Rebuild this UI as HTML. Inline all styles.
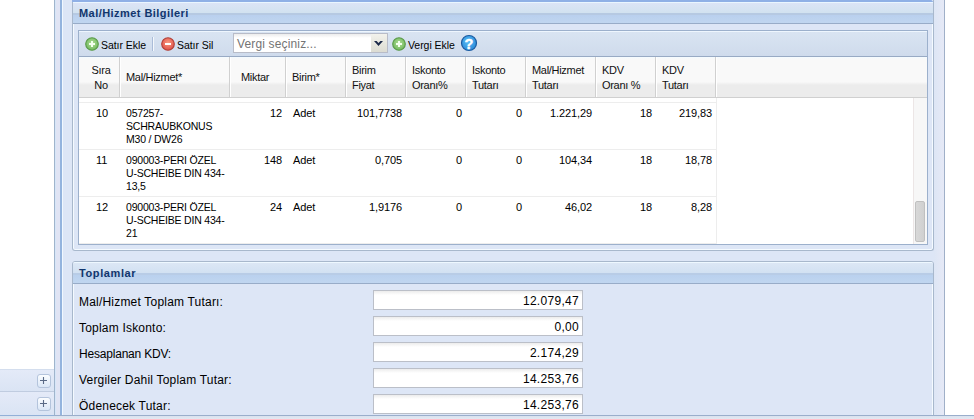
<!DOCTYPE html>
<html><head><meta charset="utf-8">
<style>
*{box-sizing:border-box;margin:0;padding:0}
html,body{width:974px;height:419px;overflow:hidden;background:#fff;font-family:"Liberation Sans",sans-serif;color:#000}
.a{position:absolute}
.hd{position:absolute;font-size:11px;line-height:13px;color:#10366e;font-weight:bold;letter-spacing:0.45px;white-space:nowrap}
.th{position:absolute;font-size:11px;line-height:15px;color:#111;white-space:nowrap;letter-spacing:-0.3px}
.sep{position:absolute;top:57px;height:40px;width:1px;background:#d0d0d0}
.seph{position:absolute;top:57px;height:40px;width:1px;background:#fff}
.td{position:absolute;font-size:11px;line-height:13px;color:#000;white-space:nowrap;letter-spacing:-0.1px}
.r{text-align:right}
.rb{position:absolute;left:79px;width:638px;height:1px;background:#ededed}
.lbl{position:absolute;left:79px;font-size:12px;line-height:14px;color:#000;white-space:nowrap;letter-spacing:0.2px}
.inp{position:absolute;left:373px;width:210px;height:20px;border:1px solid #bbbfc8;background:linear-gradient(#ececec 0,#fff 4px,#fff 100%);font-size:12px;text-align:right;padding-right:3px;line-height:20px;color:#000;letter-spacing:0.3px}
.tb{position:absolute;font-size:10.5px;line-height:13px;color:#000;white-space:nowrap;letter-spacing:-0.05px;margin-top:1px}
.pbox{position:absolute;left:37px;width:14px;height:14px;border:1px solid #b4c4dc;border-radius:3px;background:linear-gradient(#fbfdff,#dbe7f7)}
</style></head><body>

<!-- left panel -->
<div class="a" style="left:54px;top:0;width:1px;height:415px;background:#a0b4cc"></div>
<div class="a" style="left:55px;top:0;width:1px;height:415px;background:#d6e6f8"></div>
<div class="a" style="left:56px;top:0;width:4px;height:415px;background:#e0e4f4"></div>
<div class="a" style="left:60px;top:0;width:2px;height:415px;background:#94b4de"></div>
<div class="a" style="left:62px;top:0;width:1px;height:415px;background:#f0f8ff"></div>
<div class="a" style="left:63px;top:0;width:880px;height:415px;background:#dde6f6"></div>
<div class="a" style="left:934px;top:0;width:10px;height:415px;background:linear-gradient(90deg,#dde6f5,#e6e9f6)"></div>
<div class="a" style="left:944px;top:0;width:1px;height:415px;background:#a0b0c8"></div>

<!-- accordion items -->
<div class="a" style="left:0;top:369px;width:54px;height:22px;background:linear-gradient(#e4eaf8,#dae4f4);border-top:1px solid #d4deee"></div>
<div class="a" style="left:0;top:391px;width:54px;height:1px;background:#c0cce0"></div>
<div class="a" style="left:0;top:392px;width:54px;height:23px;background:linear-gradient(#e4eaf8,#dae4f4)"></div>
<div class="pbox" style="top:374px"></div>
<div class="pbox" style="top:397px"></div>
<svg class="a" style="left:37px;top:374px" width="14" height="14"><path d="M6.5 3v7M3 6.5h7" stroke="#5a6a86" stroke-width="1.1"/></svg>
<svg class="a" style="left:37px;top:397px" width="14" height="14"><path d="M6.5 3v7M3 6.5h7" stroke="#5a6a86" stroke-width="1.1"/></svg>



<!-- ===== Fieldset 1 ===== -->
<div class="a" style="left:72px;top:0;width:862px;height:251px;border:1px solid #a8b8cc;border-top:0;border-radius:0 0 3px 3px;background:#dde6f6;box-shadow:inset 1px 0 #f4faff,inset -1px 0 #f4faff,inset 0 -1px #f4faff"></div>
<div class="a" style="left:72px;top:0;width:861px;height:2px;background:#90b0e6;border-top-right-radius:2px"></div>
<div class="a" style="left:73px;top:2px;width:860px;height:22px;background:linear-gradient(#eaf6ff 0,#eaf6ff 1px,#dce4f6 1px,#d2e2f0 10.5px,#b6c9e2 11.5px,#b6c9e2 12.5px,#bad0ee 13.5px,#c0d6f0 100%);border-bottom:1px solid #98acc8"></div>
<div class="hd" style="left:79px;top:7px;">Mal/Hizmet Bilgileri</div>

<!-- grid -->
<div class="a" style="left:78px;top:30px;width:850px;height:215px;border:1px solid #9cb0cc;background:#fff"></div>
<!-- toolbar -->
<div class="a" style="left:79px;top:31px;width:848px;height:26px;background:linear-gradient(#eef6fe 0,#eef6fe 1px,#d9e4f2 1px,#cfdbec 100%);border-bottom:1px solid #98aac4"></div>
<svg class="a" style="left:84px;top:36px" width="16" height="16"><defs><radialGradient id="gg" cx="50%" cy="45%" r="55%"><stop offset="0" stop-color="#b4e09c"/><stop offset="1" stop-color="#6fb85c"/></radialGradient></defs><circle cx="8" cy="8" r="6.3" fill="url(#gg)" stroke="#5a9a4a" stroke-width="1.1"/><path d="M8 5v6M5 8h6" stroke="#f2ffee" stroke-width="2"/></svg>
<div class="tb" style="left:101px;top:38px">Satır Ekle</div>
<div class="a" style="left:152px;top:37px;width:1px;height:14px;background:#aabcd8"></div>
<div class="a" style="left:153px;top:37px;width:1px;height:14px;background:#f4f8fc"></div>
<svg class="a" style="left:160px;top:36px" width="16" height="16"><defs><radialGradient id="rg" cx="50%" cy="40%" r="60%"><stop offset="0" stop-color="#f89a80"/><stop offset="1" stop-color="#e05048"/></radialGradient></defs><circle cx="8" cy="8" r="6.3" fill="url(#rg)" stroke="#b04038" stroke-width="1.1"/><path d="M5 8h6" stroke="#fff" stroke-width="2"/></svg>
<div class="tb" style="left:177px;top:38px">Satır Sil</div>
<!-- combo -->
<div class="a" style="left:233px;top:33px;width:155px;height:20px;border:1px solid #b8bcc8;background:linear-gradient(#ececec 0,#fff 4px)"></div>
<div class="a" style="left:237px;top:37px;font-size:12px;line-height:14px;color:#747474;white-space:nowrap;letter-spacing:0.15px">Vergi seçiniz...</div>
<div class="a" style="left:371px;top:34px;width:16px;height:18px;background:linear-gradient(#f2f2ec,#dcdcd2)"></div>
<svg class="a" style="left:371px;top:34px" width="16" height="18"><path d="M3 7L5.6 7L7.5 9.1L9.4 7L12 7L7.5 12Z" fill="#1c2a4a"/></svg>
<svg class="a" style="left:391px;top:36px" width="16" height="16"><circle cx="8" cy="8" r="6.3" fill="url(#gg)" stroke="#5a9a4a" stroke-width="1.1"/><path d="M8 5v6M5 8h6" stroke="#f2ffee" stroke-width="2"/></svg>
<div class="tb" style="left:408px;top:38px">Vergi Ekle</div>
<svg class="a" style="left:460px;top:34px" width="18" height="18"><defs><radialGradient id="bg" cx="45%" cy="40%" r="60%"><stop offset="0" stop-color="#5cc0f8"/><stop offset="1" stop-color="#2a8ad8"/></radialGradient></defs><circle cx="9" cy="9" r="7.5" fill="url(#bg)" stroke="#1a5aa0" stroke-width="1.2"/><text x="9" y="14.6" text-anchor="middle" font-family="Liberation Sans" font-weight="bold" font-size="14.5" fill="#fff" stroke="#fff" stroke-width="0.4">?</text></svg>

<!-- header row -->
<div class="a" style="left:79px;top:57px;width:848px;height:41px;background:linear-gradient(#f4fbff 0,#f9f9f9 2px,#f9f9f9 62%,#ececec 70%,#ececec 100%);border-bottom:1px solid #d0d0d0"></div>
<div class="sep" style="left:119px"></div><div class="seph" style="left:120px"></div>
<div class="sep" style="left:229px"></div><div class="seph" style="left:230px"></div>
<div class="sep" style="left:285px"></div><div class="seph" style="left:286px"></div>
<div class="sep" style="left:345px"></div><div class="seph" style="left:346px"></div>
<div class="sep" style="left:405px"></div><div class="seph" style="left:406px"></div>
<div class="sep" style="left:465px"></div><div class="seph" style="left:466px"></div>
<div class="sep" style="left:525px"></div><div class="seph" style="left:526px"></div>
<div class="sep" style="left:595px"></div><div class="seph" style="left:596px"></div>
<div class="sep" style="left:655px"></div><div class="seph" style="left:656px"></div>
<div class="sep" style="left:715px"></div><div class="seph" style="left:716px"></div>

<div class="th" style="left:81px;width:40px;top:63px;text-align:center">Sıra<br>No</div>
<div class="th" style="left:126px;top:70px">Mal/Hizmet*</div>
<div class="th" style="left:241px;top:70px">Miktar</div>
<div class="th" style="left:292px;top:70px">Birim*</div>
<div class="th" style="left:352px;top:63px">Birim<br>Fiyat</div>
<div class="th" style="left:412px;top:63px">Iskonto<br>Oranı%</div>
<div class="th" style="left:472px;top:63px">Iskonto<br>Tutarı</div>
<div class="th" style="left:532px;top:63px">Mal/Hizmet<br>Tutarı</div>
<div class="th" style="left:602px;top:63px">KDV<br>Oranı %</div>
<div class="th" style="left:662px;top:63px">KDV<br>Tutarı</div>

<!-- body rows -->
<div class="rb" style="top:102px"></div>
<div class="rb" style="top:149px"></div>
<div class="rb" style="top:196px"></div>
<div class="rb" style="top:243px"></div>
<div class="a" style="left:716px;top:98px;width:1px;height:146px;background:#ededed"></div>

<!-- row 10 -->
<div class="td" style="left:96px;top:107px">10</div>
<div class="td" style="left:126px;top:107px;letter-spacing:-0.2px;font-size:10.5px">057257-<br>SCHRAUBKONUS<br>M30 / DW26</div>
<div class="td r" style="left:240px;width:42px;top:107px">12</div>
<div class="td" style="left:293px;top:107px">Adet</div>
<div class="td r" style="left:350px;width:52px;top:107px">101,7738</div>
<div class="td r" style="left:420px;width:42px;top:107px">0</div>
<div class="td r" style="left:480px;width:42px;top:107px">0</div>
<div class="td r" style="left:530px;width:62px;top:107px">1.221,29</div>
<div class="td r" style="left:610px;width:42px;top:107px">18</div>
<div class="td r" style="left:660px;width:52px;top:107px">219,83</div>

<!-- row 11 -->
<div class="td" style="left:96px;top:154px">11</div>
<div class="td" style="left:126px;top:154px;letter-spacing:-0.2px;font-size:10.5px">090003-PERI ÖZEL<br>U-SCHEIBE DIN 434-<br>13,5</div>
<div class="td r" style="left:240px;width:42px;top:154px">148</div>
<div class="td" style="left:293px;top:154px">Adet</div>
<div class="td r" style="left:350px;width:52px;top:154px">0,705</div>
<div class="td r" style="left:420px;width:42px;top:154px">0</div>
<div class="td r" style="left:480px;width:42px;top:154px">0</div>
<div class="td r" style="left:530px;width:62px;top:154px">104,34</div>
<div class="td r" style="left:610px;width:42px;top:154px">18</div>
<div class="td r" style="left:660px;width:52px;top:154px">18,78</div>

<!-- row 12 -->
<div class="td" style="left:96px;top:201px">12</div>
<div class="td" style="left:126px;top:201px;letter-spacing:-0.2px;font-size:10.5px">090003-PERI ÖZEL<br>U-SCHEIBE DIN 434-<br>21</div>
<div class="td r" style="left:240px;width:42px;top:201px">24</div>
<div class="td" style="left:293px;top:201px">Adet</div>
<div class="td r" style="left:350px;width:52px;top:201px">1,9176</div>
<div class="td r" style="left:420px;width:42px;top:201px">0</div>
<div class="td r" style="left:480px;width:42px;top:201px">0</div>
<div class="td r" style="left:530px;width:62px;top:201px">46,02</div>
<div class="td r" style="left:610px;width:42px;top:201px">18</div>
<div class="td r" style="left:660px;width:52px;top:201px">8,28</div>

<!-- scrollbar -->
<div class="a" style="left:913px;top:98px;width:14px;height:146px;background:#f7f7f7;border-left:1px solid #ece6e6"></div>
<div class="a" style="left:915px;top:201px;width:10px;height:41px;background:linear-gradient(90deg,#d8d8d8,#d0d0d0);border:1px solid #c0c0c0;border-radius:2px"></div>

<!-- ===== Fieldset 2 ===== -->
<div class="a" style="left:72px;top:261px;width:862px;height:160px;border:1px solid #a8b8cc;border-radius:3px 3px 0 0;background:#dde6f6;box-shadow:inset 1px 0 #f4faff,inset -1px 0 #f4faff"></div>
<div class="a" style="left:73px;top:262px;width:860px;height:22px;border-radius:2px 2px 0 0;background:linear-gradient(#eef8ff 0,#eef8ff 1px,#dce7f5 1px,#d2e1f2 10.5px,#b8cce6 11.5px,#b8cce6 12.5px,#bad1ee 13.5px,#c0d6f0 100%);border-bottom:1px solid #98acc8"></div>
<div class="hd" style="left:79px;top:267px;letter-spacing:0.6px">Toplamlar</div>

<div class="lbl" style="left:79px;top:295px">Mal/Hizmet Toplam Tutarı:</div>
<div class="lbl" style="left:79px;top:321px">Toplam Iskonto:</div>
<div class="lbl" style="left:79px;top:347px;letter-spacing:-0.2px">Hesaplanan KDV:</div>
<div class="lbl" style="left:79px;top:373px">Vergiler Dahil Toplam Tutar:</div>
<div class="lbl" style="left:79px;top:399px">Ödenecek Tutar:</div>

<div class="inp" style="top:290px">12.079,47</div>
<div class="inp" style="top:316px">0,00</div>
<div class="inp" style="top:342px">2.174,29</div>
<div class="inp" style="top:368px">14.253,76</div>
<div class="inp" style="top:394px">14.253,76</div>

<!-- bottom strip over -->
<div class="a" style="left:0;top:415px;width:974px;height:1px;background:#9aaecc"></div>
<div class="a" style="left:0;top:415px;width:54px;height:1px;background:#92b0d8"></div>
<div class="a" style="left:0;top:416px;width:974px;height:3px;background:linear-gradient(#dae2ee,#e2e8f2)"></div>
</body></html>
